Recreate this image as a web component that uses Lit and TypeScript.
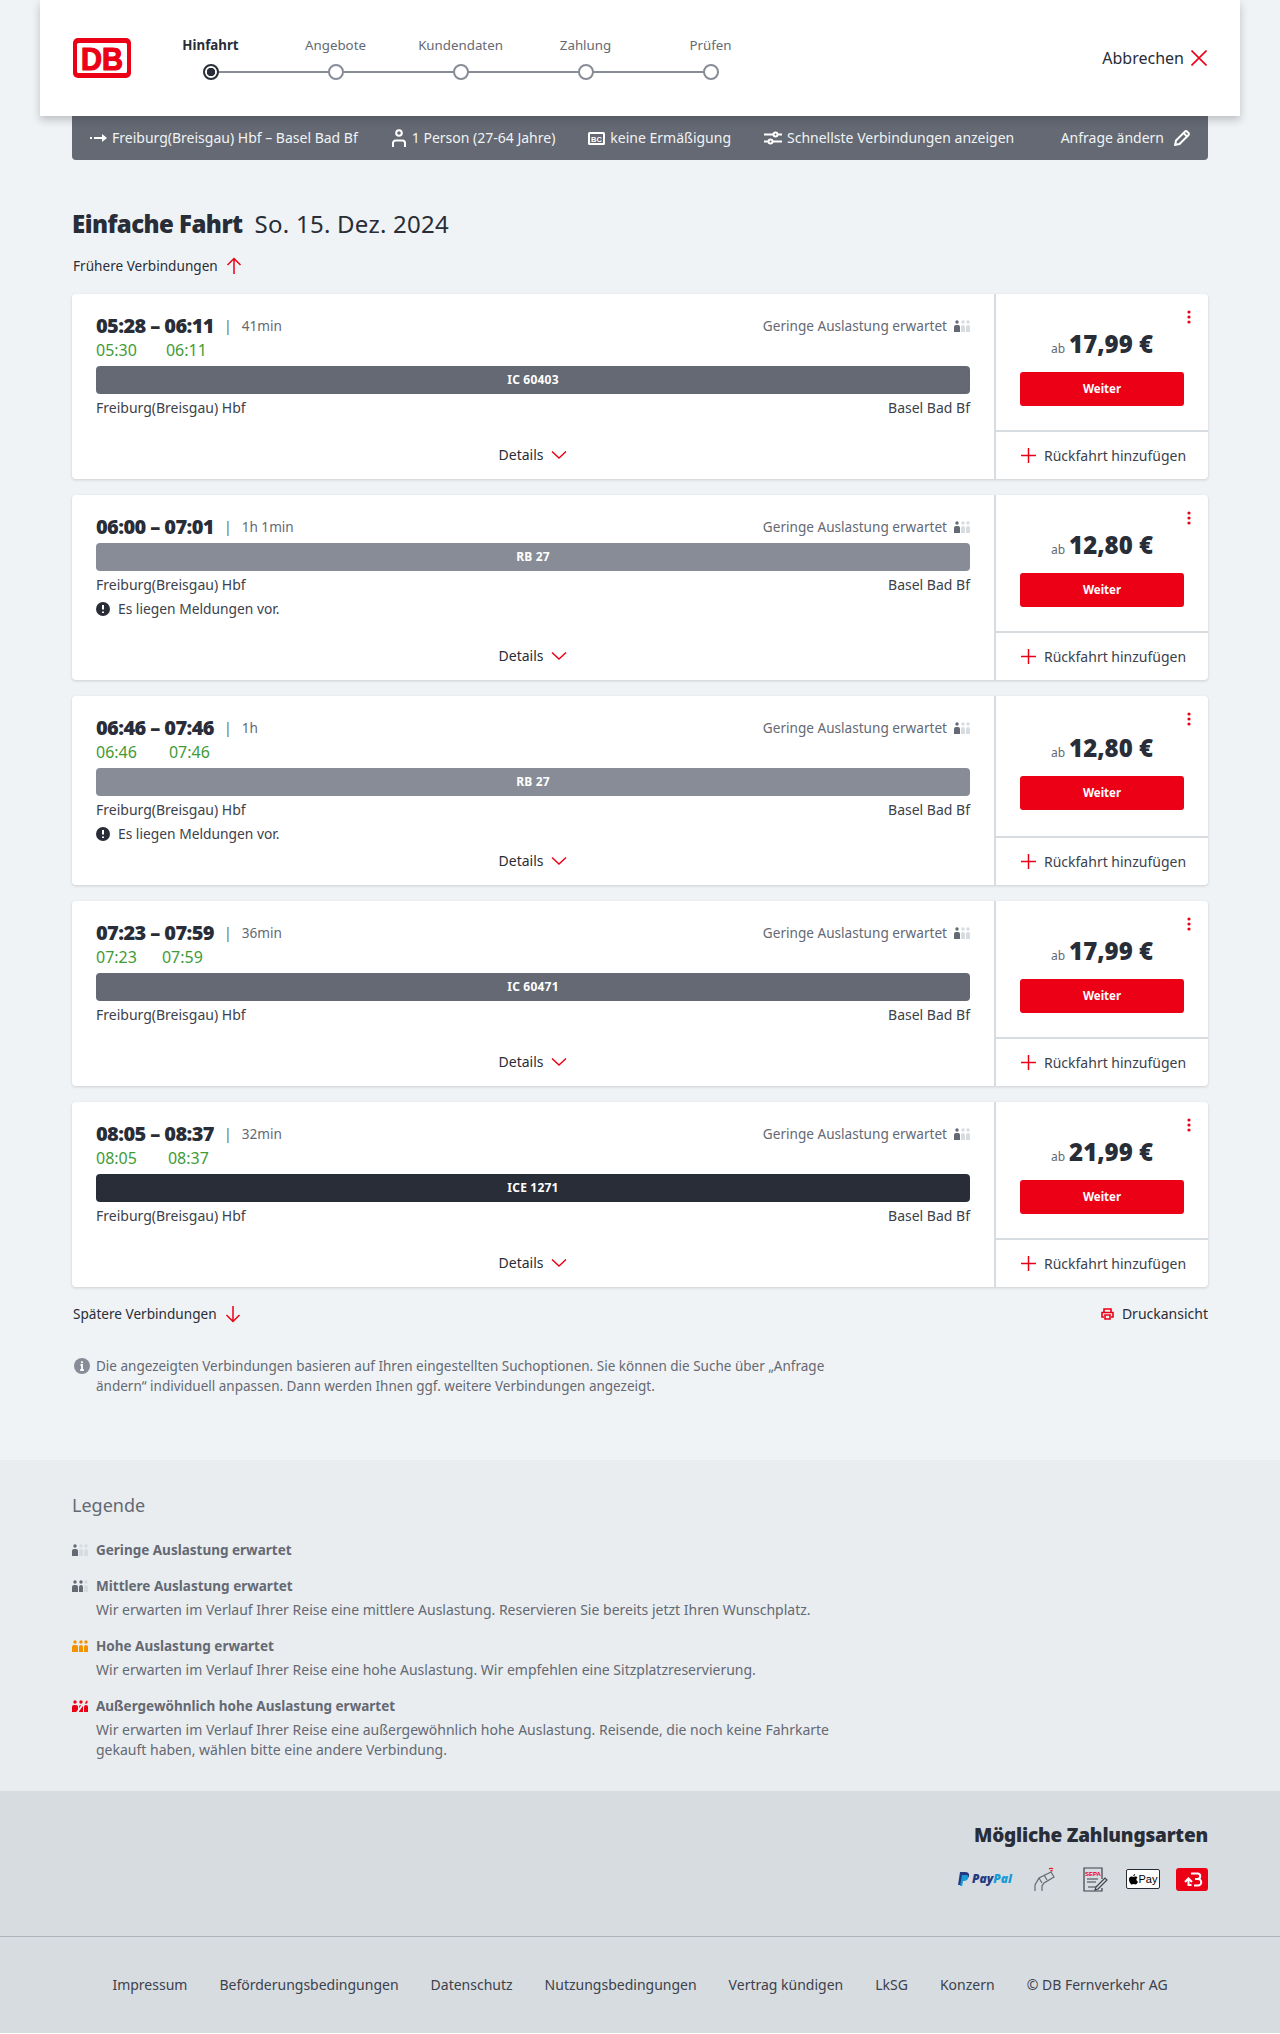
import { LitElement, html, css, svg } from "lit";
import { customElement } from "lit/decorators.js";

interface Trip {
  time: string;
  duration: string;
  live?: [string, string];
  liveGap?: number;
  train: string;
  tone: "ic" | "rb" | "ice";
  notice?: boolean;
  price: string;
}

const trips: Trip[] = [
  { time: "05:28 – 06:11", duration: "41min", live: ["05:30", "06:11"], liveGap: 29, train: "IC 60403", tone: "ic", price: "17,99 €" },
  { time: "06:00 – 07:01", duration: "1h 1min", train: "RB 27", tone: "rb", notice: true, price: "12,80 €" },
  { time: "06:46 – 07:46", duration: "1h", live: ["06:46", "07:46"], liveGap: 32, train: "RB 27", tone: "rb", notice: true, price: "12,80 €" },
  { time: "07:23 – 07:59", duration: "36min", live: ["07:23", "07:59"], liveGap: 25, train: "IC 60471", tone: "ic", price: "17,99 €" },
  { time: "08:05 – 08:37", duration: "32min", live: ["08:05", "08:37"], liveGap: 31, train: "ICE 1271", tone: "ice", price: "21,99 €" },
];

const steps = ["Hinfahrt", "Angebote", "Kundendaten", "Zahlung", "Prüfen"];
const footerLinks = [
  "Impressum",
  "Beförderungsbedingungen",
  "Datenschutz",
  "Nutzungsbedingungen",
  "Vertrag kündigen",
  "LkSG",
  "Konzern",
  "© DB Fernverkehr AG",
];

const person = (x: number, w: number, fill: string) => svg`
  <circle cx=${x + w / 2} cy="2" r="1.7" fill=${fill}></circle>
  <path d="M${x} 12V7a2 2 0 0 1 2-2h${w - 4}a2 2 0 0 1 2 2v5z" fill=${fill}></path>`;

const load = (a: string, b: string, c: string, slash = false) => html`<svg class="load" width="16" height="12" viewBox="0 0 16 12">
  ${person(0, 6, a)}${person(7, 4, b)}${person(12, 4, c)}
  ${slash ? svg`<path d="M5 12.5 14 0" stroke="#e9edf0" stroke-width="2"></path>` : ""}
</svg>`;

const arrow = (up: boolean) => html`<svg width="16" height="18" viewBox="0 0 16 18" fill="none" stroke="#ec0016" stroke-width="1.5">
  ${up ? svg`<path d="M8 17V2M1.5 8 8 1.5 14.5 8"></path>` : svg`<path d="M8 1v15M1.5 10 8 16.5 14.5 10"></path>`}
</svg>`;

const chevron = html`<svg width="16" height="10" viewBox="0 0 16 10" fill="none" stroke="#ec0016" stroke-width="1.5"><path d="M1 1.5 8 8l7-6.5"></path></svg>`;
const plus = html`<svg width="15" height="15" viewBox="0 0 15 15" stroke="#ec0016" stroke-width="1.5"><path d="M7.5 0v15M0 7.5h15"></path></svg>`;

@customElement("app-root")
export class AppRoot extends LitElement {
  static styles = css`
    :host {
      display: block;
      background: #f0f3f5;
      font-family: "Noto Sans", sans-serif;
      font-size: 14px;
      line-height: 20px;
      color: #282d37;
    }

    svg {
      display: block;
      flex: none;
    }

    .head {
      position: relative;
      z-index: 1;
      margin: 0 40px;
      height: 116px;
      padding: 0 33px;
      box-sizing: border-box;
      background: #fff;
      display: flex;
      align-items: center;
      box-shadow: 0 4px 8px rgba(40, 45, 55, 0.25);
    }

    .steps {
      display: flex;
      margin-left: 17px;
      margin-top: -1px;
    }

    .step {
      width: 125px;
      display: flex;
      flex-direction: column;
      align-items: center;
      gap: 9px;
      font-size: 13.3px;
      color: #646973;
      position: relative;
    }

    .step.active {
      color: #282d37;
      font-weight: 700;
    }

    .dot {
      width: 16px;
      height: 16px;
      box-sizing: border-box;
      border: 2px solid #878c96;
      border-radius: 50%;
      background: #fff;
      position: relative;
      z-index: 1;
    }

    .active .dot {
      border-color: #282d37;
      background: radial-gradient(circle, #282d37 0 4px, #fff 4.5px);
    }

    .step:not(:last-child)::after {
      content: "";
      position: absolute;
      left: 50%;
      width: 100%;
      bottom: 7px;
      height: 2px;
      background: #878c96;
    }

    .cancel {
      margin-left: auto;
      display: flex;
      align-items: center;
      gap: 7px;
      font-size: 16px;
    }

    .wrap {
      margin: 0 72px;
    }

    .query {
      height: 44px;
      padding: 0 18px;
      box-sizing: border-box;
      background: #646973;
      color: #f0f3f5;
      border-radius: 0 0 4px 4px;
      display: flex;
      align-items: center;
      font-size: 14px;
    }

    .query span {
      display: flex;
      align-items: center;
      gap: 5px;
      margin-right: 33px;
    }

    .query .change {
      margin: 0 0 0 auto;
      gap: 10px;
    }

    h1 {
      margin: 46px 0 0;
      font-size: 24px;
      line-height: 36px;
      font-weight: 400;
      display: flex;
      gap: 12px;
    }

    h1 b {
      font-weight: 900;
      letter-spacing: -0.55px;
    }

    h1 span {
      letter-spacing: 0.25px;
    }

    .more {
      display: flex;
      align-items: center;
      gap: 8px;
      font-size: 13.6px;
    }

    .more.top {
      margin: 14px 0 18px 1px;
    }

    .list {
      display: flex;
      flex-direction: column;
      gap: 16px;
    }

    .card {
      display: grid;
      grid-template-columns: 924px 1fr;
      background: #fff;
      border-radius: 4px;
      box-shadow: 0 1px 3px rgba(40, 45, 55, 0.18);
      min-height: 185px;
    }

    .left {
      padding: 20px 24px 9px;
      display: flex;
      flex-direction: column;
      border-right: 2px solid #d7dce1;
    }

    .row {
      display: flex;
      align-items: center;
      height: 24px;
    }

    .time {
      font-size: 20px;
      font-weight: 900;
      letter-spacing: -0.6px;
    }

    .pipe {
      margin: 0 10px;
      color: #646973;
    }

    .muted {
      color: #646973;
      font-size: 13.6px;
    }

    .occ {
      margin-left: auto;
      display: flex;
      align-items: center;
      gap: 7px;
      color: #646973;
      font-size: 13.6px;
    }

    .live {
      color: #3f9b37;
      font-size: 16px;
    }

    .train {
      height: 28px;
      margin-top: 4px;
      margin-bottom: 2px;
      border-radius: 4px;
      color: #fff;
      font-size: 12px;
      letter-spacing: 0.2px;
      font-weight: 700;
      display: flex;
      align-items: center;
      justify-content: center;
    }

    .train.ic {
      background: #646973;
    }

    .train.rb {
      background: #878c96;
    }

    .train.ice {
      background: #282d37;
    }

    .stations {
      justify-content: space-between;
      color: #3c414b;
    }

    .notice {
      gap: 8px;
      font-size: 13.8px;
      color: #3c414b;
    }

    .details {
      margin-top: auto;
      height: 30px;
      display: flex;
      align-items: center;
      justify-content: center;
      gap: 8px;
      flex: none;
    }

    .right {
      display: flex;
      flex-direction: column;
      position: relative;
    }

    .menu {
      position: absolute;
      top: 16px;
      right: 17px;
    }

    .offer {
      flex: 1;
      padding: 8px 24px 0;
      display: flex;
      flex-direction: column;
      justify-content: center;
    }

    .price {
      display: flex;
      align-items: baseline;
      justify-content: center;
      gap: 4px;
      height: 36px;
      line-height: 36px;
      font-size: 24px;
      font-weight: 900;
      margin-bottom: 10px;
    }

    .price small {
      font-size: 12px;
      font-weight: 400;
      color: #646973;
    }

    .go {
      height: 34px;
      background: #ec0016;
      color: #fff;
      border-radius: 3px;
      font-size: 11.5px;
      font-weight: 700;
      display: flex;
      align-items: center;
      justify-content: center;
    }

    .back {
      height: 47px;
      flex: none;
      border-top: 2px solid #d7dce1;
      display: flex;
      align-items: center;
      gap: 8px;
      padding-left: 25px;
      color: #3c414b;
    }

    .after {
      display: flex;
      justify-content: space-between;
      align-items: center;
      margin: 15px 0 0 1px;
      height: 24px;
    }

    .after .print {
      font-size: 14px;
    }

    .info {
      display: flex;
      gap: 6px;
      width: 766px;
      margin: 30px 0 0 2px;
      font-size: 13.5px;
      color: #646973;
    }

    .legend {
      margin-top: 64px;
      background: #e9edf0;
      padding: 30px 72px 17px;
    }

    h2 {
      margin: 0 0 18px;
      font-size: 18px;
      line-height: 30px;
      font-weight: 400;
      color: #646973;
    }

    .item {
      display: grid;
      grid-template-columns: 24px 760px;
      align-items: center;
      color: #646973;
      font-size: 14px;
      line-height: 20px;
      margin-bottom: 12px;
    }

    .item b {
      font-size: 13.5px;
      line-height: 24px;
      height: 24px;
    }

    .item p {
      grid-column: 2;
      margin: 2px 0;
    }

    .pay {
      background: #d7dce1;
      height: 146px;
      box-sizing: border-box;
      padding: 30px 72px 0;
      border-bottom: 1px solid #afb4bb;
    }

    .pay h3 {
      margin: 0;
      text-align: right;
      font-size: 19px;
      line-height: 28px;
      font-weight: 900;
      letter-spacing: -0.2px;
    }

    .methods {
      display: flex;
      justify-content: flex-end;
      align-items: center;
      height: 34px;
      margin-top: 13px;
    }

    .paypal {
      font-size: 12px;
      font-weight: 900;
      font-style: italic;
      color: #253b80;
      display: flex;
      align-items: center;
      gap: 2px;
      margin-right: 21px;
    }

    .paypal i {
      color: #179bd7;
    }

    .apple {
      width: 34px;
      height: 20px;
      box-sizing: border-box;
      border: 1px solid #282d37;
      border-radius: 2px;
      background: #fff;
      margin: 0 16px 0 18px;
      font-size: 11px;
      font-family: "Liberation Sans", sans-serif;
      color: #000;
      display: flex;
      align-items: center;
      justify-content: center;
      gap: 1px;
    }

    .links {
      background: #d7dce1;
      height: 96px;
      display: flex;
      align-items: center;
      justify-content: center;
      gap: 32px;
      color: #3c414b;
    }
  `;

  private renderTrip(t: Trip) {
    return html`<article class="card">
      <div class="left">
        <div class="row">
          <span class="time">${t.time}</span>
          <span class="pipe">|</span>
          <span class="muted">${t.duration}</span>
          <span class="occ">Geringe Auslastung erwartet ${load("#646973", "#d7dce1", "#d7dce1")}</span>
        </div>
        ${t.live
          ? html`<div class="row live" style="gap:${t.liveGap}px"><span>${t.live[0]}</span><span>${t.live[1]}</span></div>`
          : ""}
        <div class="train ${t.tone}">${t.train}</div>
        <div class="row stations"><span>Freiburg(Breisgau) Hbf</span><span>Basel Bad Bf</span></div>
        ${t.notice
          ? html`<div class="row notice">
              <svg width="14" height="14" viewBox="0 0 14 14"><circle cx="7" cy="7" r="7" fill="#282d37"></circle><path d="M7 3v4.5M7 9.5v1.5" stroke="#fff" stroke-width="2"></path></svg>
              Es liegen Meldungen vor.
            </div>`
          : ""}
        <div class="details">Details ${chevron}</div>
      </div>
      <div class="right">
        <svg class="menu" width="4" height="14" viewBox="0 0 4 14" fill="#ec0016"><circle cx="2" cy="2" r="1.6"></circle><circle cx="2" cy="7" r="1.6"></circle><circle cx="2" cy="12" r="1.6"></circle></svg>
        <div class="offer">
          <div class="price"><small>ab</small>${t.price}</div>
          <div class="go">Weiter</div>
        </div>
        <div class="back">${plus} Rückfahrt hinzufügen</div>
      </div>
    </article>`;
  }

  render() {
    return html`
      <header class="head">
        <svg width="58" height="40" viewBox="0 0 58 40">
          <rect width="58" height="40" rx="5" fill="#ec0016"></rect>
          <rect x="4" y="5" width="50" height="30" rx="1.5" fill="#fff"></rect>
          <text x="29" y="32" text-anchor="middle" font-family="Liberation Sans" font-size="32" font-weight="700" fill="#ec0016" stroke="#ec0016" stroke-width="1.2" textLength="42" lengthAdjust="spacingAndGlyphs">DB</text>
        </svg>
        <div class="steps">
          ${steps.map(
            (s, i) => html`<div class="step ${i === 0 ? "active" : ""}">${s}<div class="dot"></div></div>`
          )}
        </div>
        <div class="cancel">
          Abbrechen
          <svg width="16" height="16" viewBox="0 0 16 16" stroke="#ec0016" stroke-width="1.6"><path d="M.5.5l15 15M15.5.5l-15 15"></path></svg>
        </div>
      </header>

      <div class="wrap">
        <div class="query">
          <span>
            <svg width="17" height="10" viewBox="0 0 17 10" fill="#fff"><rect y="4" width="2" height="2"></rect><rect x="4" y="4" width="9" height="2"></rect><path d="M12 1l5 4-5 4z"></path></svg>
            Freiburg(Breisgau) Hbf – Basel Bad Bf
          </span>
          <span>
            <svg width="16" height="18" viewBox="0 0 16 18" fill="none" stroke="#fff" stroke-width="2"><circle cx="8" cy="4" r="2.800"></circle><path d="M2 18v-4a2.500 2.500 0 0 1 2.500-2.500h7A2.500 2.500 0 0 1 14 14v4"></path></svg>
            1 Person (27-64 Jahre)
          </span>
          <span>
            <svg width="17" height="13" viewBox="0 0 17 13"><rect width="17" height="13" rx="1.500" fill="#fff"></rect><rect x="2" y="2" width="13" height="9" fill="#646973"></rect><text x="8.500" y="9.500" text-anchor="middle" font-family="Liberation Sans" font-size="7.500" font-weight="700" fill="#fff">BC</text></svg>
            keine Ermäßigung
          </span>
          <span>
            <svg width="18" height="14" viewBox="0 0 18 14" fill="none" stroke="#fff" stroke-width="2"><path d="M0 3.500h9M14 3.500h4M0 10.500h4M9 10.500h9"></path><circle cx="11.500" cy="3.500" r="2"></circle><circle cx="6.500" cy="10.500" r="2"></circle></svg>
            Schnellste Verbindungen anzeigen
          </span>
          <span class="change">
            Anfrage ändern
            <svg width="16" height="16" viewBox="0 0 16 16" fill="none" stroke="#fff" stroke-width="2"><path d="M1.200 14.800l.8-4.300L10.800 1.700a1.700 1.700 0 0 1 2.400 0l1.100 1.100a1.700 1.700 0 0 1 0 2.400L5.500 14z"></path><path d="M9.500 3l3.500 3.500"></path></svg>
          </span>
        </div>

        <h1><b>Einfache Fahrt</b><span>So. 15. Dez. 2024</span></h1>
        <div class="more top">Frühere Verbindungen ${arrow(true)}</div>

        <div class="list">${trips.map((t) => this.renderTrip(t))}</div>

        <div class="after">
          <div class="more">Spätere Verbindungen ${arrow(false)}</div>
          <div class="more print">
            <svg width="13" height="12" viewBox="0 0 13 12" fill="none" stroke="#ec0016" stroke-width="1.600"><path d="M3 4V1h7v3M3 9H1V4.500h11V9h-2"></path><path d="M4 7h5v4H4z"></path></svg>
            Druckansicht
          </div>
        </div>

        <div class="info">
          <svg width="16" height="16" viewBox="0 0 16 16" style="margin-top:2px"><circle cx="8" cy="8" r="8" fill="#878c96"></circle><path d="M8 3.200v2M6.500 7H8v5M6.200 12h3.600" stroke="#fff" stroke-width="1.800" fill="none"></path></svg>
          <div>Die angezeigten Verbindungen basieren auf Ihren eingestellten Suchoptionen. Sie können die Suche über „Anfrage ändern“ individuell anpassen. Dann werden Ihnen ggf. weitere Verbindungen angezeigt.</div>
        </div>
      </div>

      <section class="legend">
        <h2>Legende</h2>
        <div class="item">${load("#646973", "#d7dce1", "#d7dce1")}<b>Geringe Auslastung erwartet</b></div>
        <div class="item">${load("#646973", "#646973", "#d7dce1")}<b>Mittlere Auslastung erwartet</b>
          <p>Wir erwarten im Verlauf Ihrer Reise eine mittlere Auslastung. Reservieren Sie bereits jetzt Ihren Wunschplatz.</p></div>
        <div class="item">${load("#f39200", "#f39200", "#f39200")}<b>Hohe Auslastung erwartet</b>
          <p>Wir erwarten im Verlauf Ihrer Reise eine hohe Auslastung. Wir empfehlen eine Sitzplatzreservierung.</p></div>
        <div class="item">${load("#ec0016", "#ec0016", "#ec0016", true)}<b>Außergewöhnlich hohe Auslastung erwartet</b>
          <p>Wir erwarten im Verlauf Ihrer Reise eine außergewöhnlich hohe Auslastung. Reisende, die noch keine Fahrkarte gekauft haben, wählen bitte eine andere Verbindung.</p></div>
      </section>

      <section class="pay">
        <h3>Mögliche Zahlungsarten</h3>
        <div class="methods">
          <div class="paypal">
            <svg width="13" height="15" viewBox="0 0 13 15"><path d="M3 0h5c3 0 4.500 1.500 4 4-.500 2.800-2.500 4-5 4H5l-.8 5H1z" fill="#253b80"></path><path d="M5 3h4c2 0 2.500 1 2 3-.500 2.300-2 3-4 3H6l-.8 5H3z" fill="#179bd7"></path></svg>
            <span>Pay<i>Pal</i></span>
          </div>
          <svg width="23" height="24" viewBox="0 0 23 24" fill="none" stroke="#646973" stroke-width="1.200"><path d="M2 24v-6l4-7 12-6 3 5-10 6-2 3v5"></path><path d="M6 11l3 5M11 8l3 5"></path><path d="M16 2q2-1.500 4 0M17.500 4q1-.8 2 0" stroke="#ec0016"></path></svg>
          <svg width="25" height="25" viewBox="0 0 25 25" fill="none" stroke="#3c414b" stroke-width="1.200" style="margin-left:27px"><path d="M19 12V1H1v23h18v-3"></path><path d="M4 12h11M4 15h9M5 20h8"></path><path d="M13 20l9-9 2 2-9 9-3 1z" fill="#d7dce1"></path><text x="10" y="8.500" text-anchor="middle" font-family="Liberation Sans" font-size="6" font-weight="700" fill="#ec0016" stroke="none">SEPA</text></svg>
          <div class="apple">
            <svg width="9" height="11" viewBox="0 0 9 11" fill="#000"><path d="M6.200 0c0 1.200-.9 2.200-2 2.200C4.200 1 5.100.100 6.200 0zM4.400 3c.5 0 1.100-.5 2.100-.5.800 0 1.600.4 2 1.100-1.700 1-1.400 3.400.4 4.100-.4 1.100-1.300 2.800-2.400 2.800-.7 0-1-.4-1.800-.4s-1.200.4-1.800.4C1.700 10.500 0 7.800 0 5.500 0 3.600 1.200 2.500 2.400 2.500c.8 0 1.500.5 2 .5z"></path></svg>
            Pay
          </div>
          <svg width="32" height="23" viewBox="0 0 32 23"><rect width="32" height="23" rx="3" fill="#ec0016"></rect><path d="M9 14l3.500-3.500 3.500 3.500M12.500 11v6h3M15 5.500h6.500a2.500 2.500 0 0 1 0 5.500H19h3a3 3 0 0 1 0 6.500h-4" fill="none" stroke="#fff" stroke-width="2"></path></svg>
        </div>
      </section>
      <nav class="links">${footerLinks.map((l) => html`<span>${l}</span>`)}</nav>
    `;
  }
}
